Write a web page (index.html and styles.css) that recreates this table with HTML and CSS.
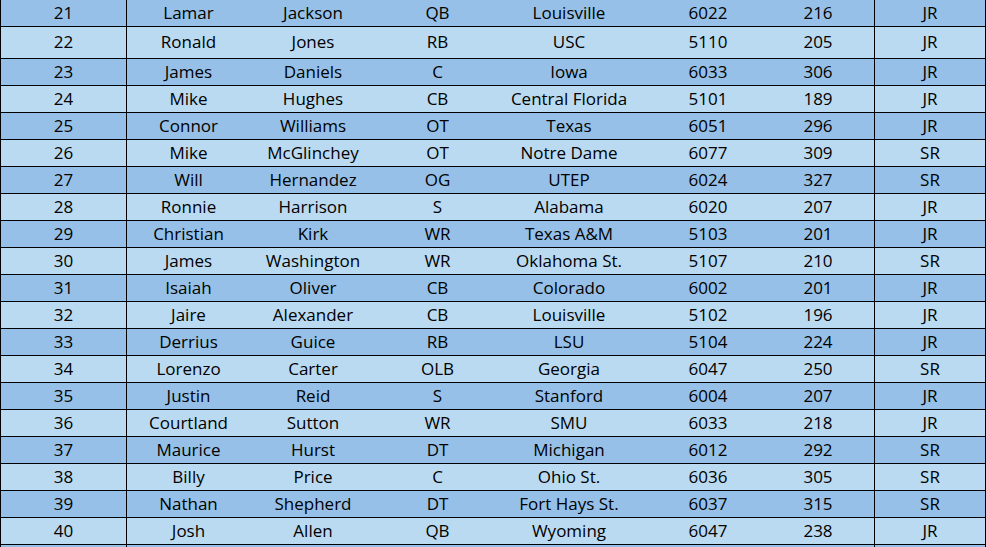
FILE: index.html
```html
<!DOCTYPE html>
<html lang="en">
<head>
<meta charset="utf-8">
<title>Prospects 21-40</title>
<link rel="stylesheet" href="styles.css">
</head>
<body>
<div class="sheet">
  <div class="row dark"><div class="c num">21</div><div class="c">Lamar</div><div class="c">Jackson</div><div class="c">QB</div><div class="c">Louisville</div><div class="c">6022</div><div class="c">216</div><div class="c"></div><div class="c cls">JR</div></div>
  <div class="row light tall"><div class="c num">22</div><div class="c">Ronald</div><div class="c">Jones</div><div class="c">RB</div><div class="c">USC</div><div class="c">5110</div><div class="c">205</div><div class="c"></div><div class="c cls">JR</div></div>
  <div class="row dark"><div class="c num">23</div><div class="c">James</div><div class="c">Daniels</div><div class="c">C</div><div class="c">Iowa</div><div class="c">6033</div><div class="c">306</div><div class="c"></div><div class="c cls">JR</div></div>
  <div class="row light"><div class="c num">24</div><div class="c">Mike</div><div class="c">Hughes</div><div class="c">CB</div><div class="c">Central Florida</div><div class="c">5101</div><div class="c">189</div><div class="c"></div><div class="c cls">JR</div></div>
  <div class="row dark"><div class="c num">25</div><div class="c">Connor</div><div class="c">Williams</div><div class="c">OT</div><div class="c">Texas</div><div class="c">6051</div><div class="c">296</div><div class="c"></div><div class="c cls">JR</div></div>
  <div class="row light"><div class="c num">26</div><div class="c">Mike</div><div class="c">McGlinchey</div><div class="c">OT</div><div class="c">Notre Dame</div><div class="c">6077</div><div class="c">309</div><div class="c"></div><div class="c cls">SR</div></div>
  <div class="row dark"><div class="c num">27</div><div class="c">Will</div><div class="c">Hernandez</div><div class="c">OG</div><div class="c">UTEP</div><div class="c">6024</div><div class="c">327</div><div class="c"></div><div class="c cls">SR</div></div>
  <div class="row light"><div class="c num">28</div><div class="c">Ronnie</div><div class="c">Harrison</div><div class="c">S</div><div class="c">Alabama</div><div class="c">6020</div><div class="c">207</div><div class="c"></div><div class="c cls">JR</div></div>
  <div class="row dark"><div class="c num">29</div><div class="c">Christian</div><div class="c">Kirk</div><div class="c">WR</div><div class="c">Texas A&amp;M</div><div class="c">5103</div><div class="c">201</div><div class="c"></div><div class="c cls">JR</div></div>
  <div class="row light"><div class="c num">30</div><div class="c">James</div><div class="c">Washington</div><div class="c">WR</div><div class="c">Oklahoma St.</div><div class="c">5107</div><div class="c">210</div><div class="c"></div><div class="c cls">SR</div></div>
  <div class="row dark"><div class="c num">31</div><div class="c">Isaiah</div><div class="c">Oliver</div><div class="c">CB</div><div class="c">Colorado</div><div class="c">6002</div><div class="c">201</div><div class="c"></div><div class="c cls">JR</div></div>
  <div class="row light"><div class="c num">32</div><div class="c">Jaire</div><div class="c">Alexander</div><div class="c">CB</div><div class="c">Louisville</div><div class="c">5102</div><div class="c">196</div><div class="c"></div><div class="c cls">JR</div></div>
  <div class="row dark"><div class="c num">33</div><div class="c">Derrius</div><div class="c">Guice</div><div class="c">RB</div><div class="c">LSU</div><div class="c">5104</div><div class="c">224</div><div class="c"></div><div class="c cls">JR</div></div>
  <div class="row light"><div class="c num">34</div><div class="c">Lorenzo</div><div class="c">Carter</div><div class="c">OLB</div><div class="c">Georgia</div><div class="c">6047</div><div class="c">250</div><div class="c"></div><div class="c cls">SR</div></div>
  <div class="row dark"><div class="c num">35</div><div class="c">Justin</div><div class="c">Reid</div><div class="c">S</div><div class="c">Stanford</div><div class="c">6004</div><div class="c">207</div><div class="c"></div><div class="c cls">JR</div></div>
  <div class="row light"><div class="c num">36</div><div class="c">Courtland</div><div class="c">Sutton</div><div class="c">WR</div><div class="c">SMU</div><div class="c">6033</div><div class="c">218</div><div class="c"></div><div class="c cls">JR</div></div>
  <div class="row dark"><div class="c num">37</div><div class="c">Maurice</div><div class="c">Hurst</div><div class="c">DT</div><div class="c">Michigan</div><div class="c">6012</div><div class="c">292</div><div class="c"></div><div class="c cls">SR</div></div>
  <div class="row light"><div class="c num">38</div><div class="c">Billy</div><div class="c">Price</div><div class="c">C</div><div class="c">Ohio St.</div><div class="c">6036</div><div class="c">305</div><div class="c"></div><div class="c cls">SR</div></div>
  <div class="row dark"><div class="c num">39</div><div class="c">Nathan</div><div class="c">Shepherd</div><div class="c">DT</div><div class="c">Fort Hays St.</div><div class="c">6037</div><div class="c">315</div><div class="c"></div><div class="c cls">SR</div></div>
  <div class="row light"><div class="c num">40</div><div class="c">Josh</div><div class="c">Allen</div><div class="c">QB</div><div class="c">Wyoming</div><div class="c">6047</div><div class="c">238</div><div class="c"></div><div class="c cls">JR</div></div>
  <div class="row dark"><div class="c num"></div><div class="c"></div><div class="c"></div><div class="c"></div><div class="c"></div><div class="c"></div><div class="c"></div><div class="c"></div><div class="c cls"></div></div>
</div>
</body>
</html>
```

FILE: styles.css
```css
* { box-sizing: border-box; }
html, body {
  margin: 0;
  padding: 0;
  width: 986px;
  height: 547px;
  overflow: hidden;
  background: #ffffff;
}
.sheet {
  display: flex;
  flex-direction: column;
  font-family: "Open Sans", Lato, sans-serif;
  font-size: 17px;
  font-weight: 500;
  color: #000;
}
.row {
  display: grid;
  grid-template-columns: 126px 123px 126px 123px 140px 138px 82px 15px 111px;
  height: 27px;
  flex: none;
  border-left: 1px solid #000;
  border-right: 1px solid #000;
  border-bottom: 1px solid #000;
}
.row.tall { height: 32px; }
.dark { background: #96c0e8; }
.light { background: #badaf2; }
.c {
  display: flex;
  align-items: center;
  justify-content: center;
  white-space: nowrap;
  line-height: 1;
  padding-bottom: 2px;
}
.num { border-right: 1px solid #000; }
.cls { border-left: 1px solid #000; }
```
